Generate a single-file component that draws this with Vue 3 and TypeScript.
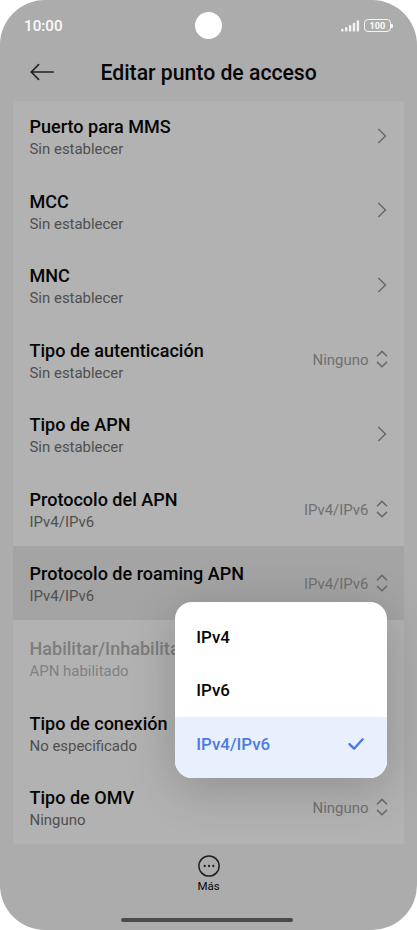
<script setup lang="ts">
import { ref } from 'vue'

type Control = 'chevron' | 'select' | 'none'

interface Setting {
  title: string
  summary: string
  control: Control
  value?: string
  active?: boolean
  disabled?: boolean
}

const settings: Setting[] = [
  { title: 'Puerto para MMS', summary: 'Sin establecer', control: 'chevron' },
  { title: 'MCC', summary: 'Sin establecer', control: 'chevron' },
  { title: 'MNC', summary: 'Sin establecer', control: 'chevron' },
  { title: 'Tipo de autenticación', summary: 'Sin establecer', control: 'select', value: 'Ninguno' },
  { title: 'Tipo de APN', summary: 'Sin establecer', control: 'chevron' },
  { title: 'Protocolo del APN', summary: 'IPv4/IPv6', control: 'select', value: 'IPv4/IPv6' },
  { title: 'Protocolo de roaming APN', summary: 'IPv4/IPv6', control: 'select', value: 'IPv4/IPv6', active: true },
  { title: 'Habilitar/Inhabilita', summary: 'APN habilitado', control: 'none', disabled: true },
  { title: 'Tipo de conexión', summary: 'No especificado', control: 'none' },
  { title: 'Tipo de OMV', summary: 'Ninguno', control: 'select', value: 'Ninguno' },
]

const options: string[] = ['IPv4', 'IPv6', 'IPv4/IPv6']
const selected = ref<string>('IPv4/IPv6')
</script>

<template>
  <div class="phone">
    <div class="status">
      <span class="clock">10:00</span>
      <div class="indicators">
        <svg class="signal" width="20" height="14" viewBox="0 0 20 14">
          <path d="M2.3 11.4v-.5M6.2 11.4V9.2M10.1 11.4V7.2M14 11.4V5M17.9 11.4V2.4" />
        </svg>
        <div class="battery">100</div>
        <i class="battery-tip"></i>
      </div>
      <i class="camera"></i>
    </div>

    <header class="header">
      <svg class="back" width="26" height="20" viewBox="0 0 26 20">
        <path d="M24.2 10H2.2M9.6 2.6L2.2 10l7.4 7.4" />
      </svg>
      <h1>Editar punto de acceso</h1>
    </header>

    <main class="card">
      <div
        v-for="item in settings"
        :key="item.title"
        class="row"
        :class="{ active: item.active, disabled: item.disabled }"
      >
        <div class="labels">
          <div class="title">{{ item.title }}</div>
          <div class="summary">{{ item.summary }}</div>
        </div>
        <span v-if="item.value" class="value">{{ item.value }}</span>
        <svg v-if="item.control === 'chevron'" class="icon" width="12" height="20" viewBox="0 0 12 20">
          <path d="M2.3 3l7.2 7-7.2 7" />
        </svg>
        <svg v-else-if="item.control === 'select'" class="icon" width="12" height="20" viewBox="0 0 12 20">
          <path d="M1 7.3l5-4.9 5 4.9M1 12.9l5 4.9 5-4.9" />
        </svg>
      </div>
    </main>

    <footer class="footer">
      <svg width="24" height="24" viewBox="0 0 24 24">
        <circle class="ring" cx="12" cy="12" r="10.1" />
        <circle cx="7.7" cy="12" r="1.15" />
        <circle cx="12" cy="12" r="1.15" />
        <circle cx="16.3" cy="12" r="1.15" />
      </svg>
      <span>Más</span>
      <i class="home"></i>
    </footer>

    <div class="menu">
      <div
        v-for="option in options"
        :key="option"
        class="option"
        :class="{ selected: option === selected }"
        @click="selected = option"
      >
        <span>{{ option }}</span>
        <svg v-if="option === selected" width="18" height="16" viewBox="0 0 18 16">
          <path d="M2.4 8.1l4.7 4.6 8.5-9.5" />
        </svg>
      </div>
    </div>
  </div>
</template>

<style>
body {
  background: #fff;
}
</style>

<style scoped>
.phone {
  position: relative;
  box-sizing: border-box;
  width: 417px;
  height: 930px;
  display: flex;
  flex-direction: column;
  overflow: hidden;
  border-radius: 45px;
  background: #acacac;
  color: #050505;
  font-family: Roboto, "Liberation Sans", sans-serif;
}

.status {
  position: relative;
  flex: none;
  height: 51px;
  box-sizing: border-box;
  padding: 1px 24px 0 24px;
  display: flex;
  align-items: center;
  justify-content: space-between;
  color: #fafafa;
}

.clock {
  font-size: 15.2px;
  font-weight: 500;
}

.indicators {
  display: flex;
  align-items: center;
  padding-bottom: 1px;
}

.signal {
  margin-right: 4px;
  fill: none;
  stroke: #f4f4f4;
  stroke-width: 2.4;
  stroke-linecap: round;
}

.battery {
  box-sizing: border-box;
  width: 27px;
  height: 13px;
  border: 1.5px solid #f4f4f4;
  border-radius: 4px;
  font-size: 9.2px;
  font-weight: 700;
  line-height: 11px;
  text-align: center;
}

.battery-tip {
  width: 2px;
  height: 4px;
  border-radius: 0 1px 1px 0;
  background: #f4f4f4;
}

.camera {
  position: absolute;
  left: 195px;
  top: 12px;
  width: 27px;
  height: 27px;
  border-radius: 50%;
  background: #fff;
}

.header {
  flex: none;
  height: 50px;
  box-sizing: border-box;
  padding: 0 90px 8px 29px;
  display: flex;
  align-items: center;
}

.header h1 {
  flex: 1;
  margin: 0;
  padding: 1px 0 0 45.5px;
  font-size: 21.2px;
  font-weight: 500;
  line-height: 24px;
  white-space: nowrap;
}

.back {
  fill: none;
  stroke: #222;
  stroke-width: 1.7;
  stroke-linecap: round;
  stroke-linejoin: round;
}

.card {
  flex: none;
  height: 743px;
  margin: 0 13px;
  display: flex;
  flex-direction: column;
  justify-content: flex-end;
  overflow: hidden;
  background: #b2b2b2;
}

.row {
  flex: none;
  height: 74.55px;
  box-sizing: border-box;
  padding: 0 16px 0 16.5px;
  display: flex;
  align-items: center;
}

.row.active {
  background: #a4a4a4;
}

.row.disabled {
  color: #7d7d7d;
}

.labels {
  flex: 1;
  min-width: 0;
  padding-top: 3.8px;
  white-space: nowrap;
}

.title {
  font-size: 18.05px;
  font-weight: 500;
  line-height: 23px;
}

.summary {
  color: #4f4f4f;
  font-size: 14.95px;
  line-height: 22px;
}

.disabled .summary {
  color: #818181;
}

.value {
  margin-right: 7.5px;
  padding-top: 2px;
  color: #707070;
  font-size: 14.95px;
  line-height: 20px;
}

.icon {
  flex: none;
  fill: none;
  stroke: #696969;
  stroke-width: 1.5;
}

.footer {
  flex: 1;
  display: flex;
  flex-direction: column;
  align-items: center;
  padding-top: 10px;
  font-size: 11.5px;
  line-height: 15px;
}

.footer svg {
  margin: 0 0 1px;
  fill: #202020;
}

.footer .ring {
  fill: none;
  stroke: #202020;
  stroke-width: 1.5;
}

.home {
  width: 172px;
  height: 4px;
  margin: 23.5px 3px 0 0;
  border-radius: 2px;
  background: #4b4b4b;
}

.menu {
  position: absolute;
  left: 175.3px;
  top: 602px;
  width: 212px;
  height: 176.3px;
  box-sizing: border-box;
  padding-top: 9px;
  display: flex;
  flex-direction: column;
  overflow: hidden;
  border-radius: 17px;
  background: #fff;
  box-shadow: 0 10px 50px rgba(0, 0, 0, 0.2);
}

.option {
  flex: none;
  height: 53px;
  box-sizing: border-box;
  padding: 0 22px 1.5px 21px;
  display: flex;
  align-items: center;
  justify-content: space-between;
  font-size: 16.9px;
  font-weight: 500;
}

.option.selected {
  flex: 1;
  padding-bottom: 7px;
  background: #e9f0fd;
  color: #4b7be5;
}

.option svg {
  fill: none;
  stroke: #4b7be5;
  stroke-width: 2.4;
  stroke-linecap: round;
  stroke-linejoin: round;
}
</style>
